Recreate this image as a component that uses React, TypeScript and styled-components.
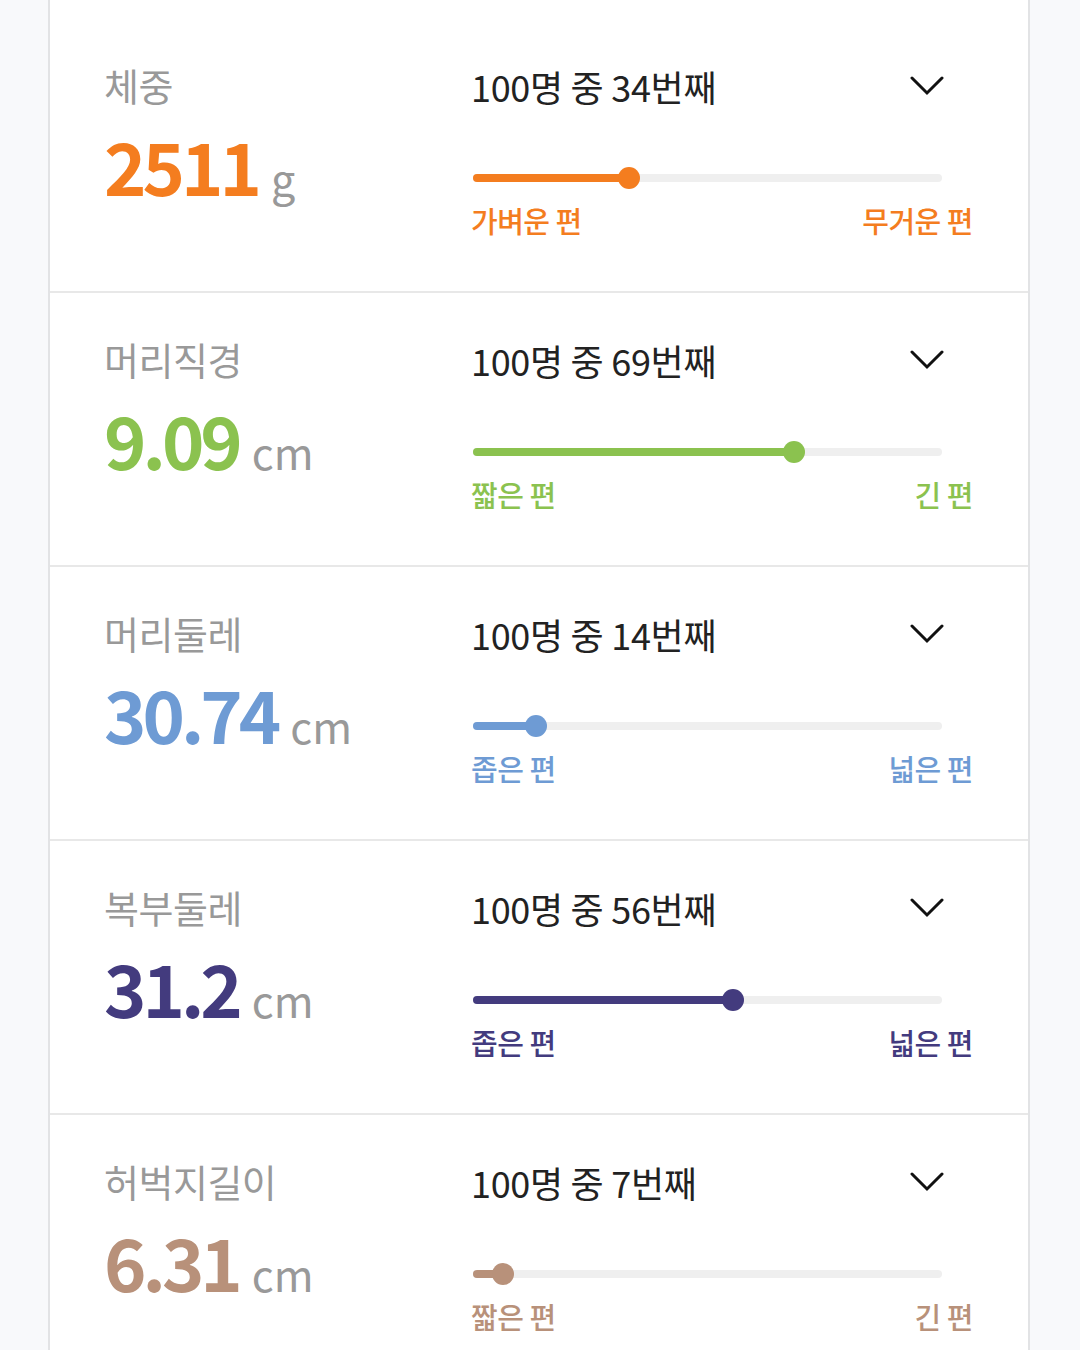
import React, { FunctionComponent, ReactElement } from 'react'
import styled, { createGlobalStyle } from 'styled-components'

interface Measure {
  name: string
  value: string
  unit: string
  rank: number
  color: string
  low: string
  high: string
}

const measures: Measure[] = [
  { name: '체중', value: '2511', unit: 'g', rank: 34, color: '#f47d1f', low: '가벼운 편', high: '무거운 편' },
  { name: '머리직경', value: '9.09', unit: 'cm', rank: 69, color: '#8bc24f', low: '짧은 편', high: '긴 편' },
  { name: '머리둘레', value: '30.74', unit: 'cm', rank: 14, color: '#6e9bd4', low: '좁은 편', high: '넓은 편' },
  { name: '복부둘레', value: '31.2', unit: 'cm', rank: 56, color: '#433b7e', low: '좁은 편', high: '넓은 편' },
  { name: '허벅지길이', value: '6.31', unit: 'cm', rank: 7, color: '#b8917a', low: '짧은 편', high: '긴 편' },
]

const GlobalStyle = createGlobalStyle`
  html, body {
    margin: 0;
    padding: 0;
    background: #f8f9fb;
    font-family: "Noto Sans CJK KR", "Noto Sans", sans-serif;
  }
`

const Chevron = (): ReactElement => (
  <svg width="34" height="20" viewBox="0 0 34 20" fill="none">
    <path d="M2 2 L17 17 L32 2" stroke="#111" strokeWidth="3" strokeLinecap="round" strokeLinejoin="miter" />
  </svg>
)

const Row: FunctionComponent<{ item: Measure }> = ({ item }): ReactElement => {
  return (
    <RowWrapper>
      <Summary>
        <Name>{item.name}</Name>
        <Value>
          <Number color={item.color}>{item.value}</Number>
          <Unit>{item.unit}</Unit>
        </Value>
      </Summary>
      <Detail>
        <Header>
          <Rank>100명 중 {item.rank}번째</Rank>
          <Chevron />
        </Header>
        <Slider>
          <Track>
            <Fill color={item.color} style={{ width: `calc(${item.rank}% - 3px)` }} />
            <Thumb color={item.color} style={{ left: `calc(${item.rank}% - 3px)` }} />
          </Track>
        </Slider>
        <Scale color={item.color}>
          <span>{item.low}</span>
          <span>{item.high}</span>
        </Scale>
      </Detail>
    </RowWrapper>
  )
}

const App = (): ReactElement => {
  return (
    <>
      <GlobalStyle />
      <Card>
        {measures.map((item) => (
          <Row key={item.name} item={item} />
        ))}
      </Card>
    </>
  )
}

const Card = styled.div`
  box-sizing: border-box;
  width: 982px;
  margin-left: 48px;
  min-height: 1350px;
  padding-top: 19px;
  background: #ffffff;
  border-left: 2px solid #e2e3e5;
  border-right: 2px solid #e2e3e5;
`

const RowWrapper = styled.div`
  display: grid;
  grid-template-columns: 367px 502px;
  height: 272px;
  padding-left: 54px;
  border-bottom: 2px solid #e8e8e8;
`

const Summary = styled.div`
  display: flex;
  flex-direction: column;
  padding-top: 45px;
`

const Name = styled.div`
  font-size: 38px;
  line-height: 42px;
  color: #999999;
  letter-spacing: -0.5px;
`

const Value = styled.div`
  display: flex;
  align-items: baseline;
  gap: 13px;
  margin-top: 23px;
`

const Number = styled.span<{ color: string }>`
  font-size: 72px;
  line-height: 1;
  font-weight: 700;
  letter-spacing: -4px;
  color: ${(p) => p.color};
`

const Unit = styled.span`
  font-size: 43px;
  line-height: 1;
  color: #999999;
`

const Detail = styled.div`
  display: flex;
  flex-direction: column;
  padding-top: 47px;
`

const Header = styled.div`
  display: flex;
  align-items: center;
  justify-content: space-between;
  padding-right: 29px;
  height: 40px;
`

const Rank = styled.div`
  font-size: 36px;
  line-height: 40px;
  color: #222222;
  letter-spacing: -0.3px;
`

const Slider = styled.div`
  margin-top: 61px;
  padding: 0 31px 0 2px;
  height: 22px;
  display: flex;
  align-items: center;
`

const Track = styled.div`
  position: relative;
  flex: 1;
  height: 8px;
  border-radius: 4px;
  background: #efefef;
`

const Fill = styled.div<{ color: string }>`
  position: absolute;
  left: 0;
  top: 0;
  height: 8px;
  border-radius: 4px;
  background: ${(p) => p.color};
`

const Thumb = styled.div<{ color: string }>`
  position: absolute;
  top: 50%;
  width: 22px;
  height: 22px;
  border-radius: 50%;
  transform: translate(-50%, -50%);
  background: ${(p) => p.color};
`

const Scale = styled.div<{ color: string }>`
  display: flex;
  justify-content: space-between;
  margin-top: 14px;
  font-size: 29px;
  line-height: 34px;
  font-weight: 500;
  letter-spacing: -0.5px;
  color: ${(p) => p.color};
`

export default App
